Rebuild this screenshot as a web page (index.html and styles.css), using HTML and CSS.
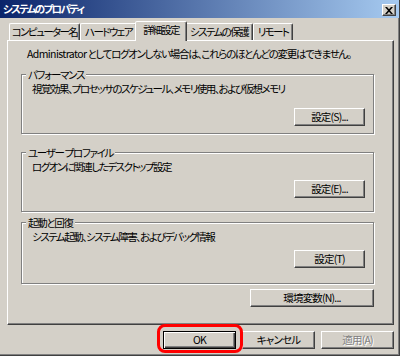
FILE: index.html
```html
<!DOCTYPE html>
<html lang="ja">
<head>
    <meta charset="UTF-8">
    <title>システムのプロパティ</title>
    <link rel="stylesheet" href="styles.css">
</head>
<body>
    <div class="window">
        <div class="titlebar">
            <span class="title">システムのプロパティ</span>
            <span class="close">
                <svg width="8" height="7" viewBox="0 0 8 7"><path d="M0 0h2l2 2.2L6 0h2L5 3.5 8 7H6L4 4.8 2 7H0l3-3.5z" fill="#000"/></svg>
            </span>
        </div>
        <div class="body">
            <div class="tabs">
                <span class="tab t1">コンピューター名</span>
                <span class="tab t2">ハードウェア</span>
                <span class="tab t3 active">詳細設定</span>
                <span class="tab t4">システムの保護</span>
                <span class="tab t5">リモート</span>
            </div>
            <div class="panel">
                <p class="note"><span class="latin">Administrator</span> としてログオンしない場合は、これらのほとんどの変更はできません。</p>

                <div class="group g-perf">
                    <div class="legend">パフォーマンス</div>
                    <p class="desc">視覚効果、プロセッサのスケジュール、メモリ使用、および仮想メモリ</p>
                    <button class="btn">設定(S)...</button>
                </div>

                <div class="group g-prof">
                    <div class="legend">ユーザー プロファイル</div>
                    <p class="desc">ログオンに関連したデスクトップ設定</p>
                    <button class="btn">設定(E)...</button>
                </div>

                <div class="group g-boot">
                    <div class="legend">起動と回復</div>
                    <p class="desc">システム起動、システム障害、およびデバッグ情報</p>
                    <button class="btn">設定(T)</button>
                </div>

                <button class="btn env">環境変数(N)...</button>
            </div>
            <div class="actions">
                <button class="btn wide ok">OK</button>
                <button class="btn wide">キャンセル</button>
                <button class="btn wide" disabled>適用(A)</button>
            </div>
        </div>
    </div>
</body>
</html>
```

FILE: styles.css
```css
* {
    box-sizing: border-box;
    margin: 0;
    padding: 0;
}
body {
    width: 400px;
    height: 356px;
    overflow: hidden;
    background: #d4d0c8;
    color: #000;
    font: 10.5px/14px "Noto Sans CJK JP", sans-serif;
    font-feature-settings: "palt";
    letter-spacing: -1.3px;
}
.window {
    width: 400px;
    height: 356px;
    border-right: 1px solid #404040;
    border-bottom: 1px solid #404040;
    box-shadow: inset -1px -1px 0 #808080;
}

/* タイトルバー */
.titlebar {
    height: 18px;
    display: flex;
    align-items: center;
    justify-content: space-between;
    padding: 0 3px 0 3px;
    background: linear-gradient(to right, #0a246a, #a6caf0);
    color: #fff;
    font-weight: bold;
    letter-spacing: -1.7px;
}
.close {
    width: 14px;
    height: 12px;
    margin-top: 2px;
    display: flex;
    align-items: center;
    justify-content: center;
    background: #d4d0c8;
    border: 1px solid;
    border-color: #fff #404040 #404040 #fff;
    box-shadow: inset -1px -1px 0 #808080;
}

.body {
    padding: 3px 5px 0 7px;
}

/* タブ */
.tabs {
    display: flex;
    align-items: flex-end;
    height: 19px;
    padding-left: 2px;
}
.tab {
    height: 17px;
    padding-top: 1px;
    text-align: center;
    white-space: nowrap;
    letter-spacing: -1.6px;
    border: 1px solid;
    border-bottom: none;
    border-color: #fff #404040 transparent #fff;
    border-radius: 2px 2px 0 0;
    box-shadow: inset -1px 0 0 #808080;
}
.t1 { width: 71px; }
.t2 { width: 57px; }
.t3 { width: 48px; }
.t4 { width: 68px; }
.t5 { width: 40px; }
.tab.active {
    position: relative;
    z-index: 1;
    width: 52px;
    height: 20px;
    margin: 0 -2px -1px;
    padding-top: 1px;
    background: #d4d0c8;
}

/* パネル */
.panel {
    height: 285px;
    padding: 6px 19px 0 13px;
    border: 1px solid;
    border-color: #fff #404040 #404040 #fff;
    box-shadow: inset -1px -1px 0 #808080;
}
.note {
    padding-left: 6px;
    white-space: nowrap;
}
.latin {
    letter-spacing: -0.6px;
}

.group {
    display: flex;
    flex-direction: column;
    height: 60px;
    margin-top: 18px;
    padding: 0 8px 0 10px;
    border: 1px solid #808080;
    box-shadow: 1px 1px 0 #fff, inset 1px 1px 0 #fff;
}
.g-perf { margin-top: 13px; }
.g-boot { height: 62px; margin-top: 10px; }
.legend {
    align-self: flex-start;
    margin: -7px 0 0 -6px;
    padding: 0 2px;
    background: #d4d0c8;
    white-space: nowrap;
}
.desc {
    white-space: nowrap;
    letter-spacing: -1.5px;
}
.group .btn {
    margin-top: 6px;
    align-self: flex-end;
}
.g-perf .btn { margin-top: 12px; }

/* ボタン */
.btn {
    display: block;
    width: 71px;
    height: 18px;
    background: #d4d0c8;
    color: #000;
    font: inherit;
    letter-spacing: -0.8px;
    text-align: center;
    border: 1px solid;
    border-color: #fff #404040 #404040 #fff;
    border-radius: 0;
    box-shadow: inset -1px -1px 0 #808080;
    appearance: none;
}
.btn.env {
    width: 124px;
    margin: 5px 0 0 auto;
}
.btn:disabled {
    color: #808080;
    text-shadow: 1px 1px 0 #fff;
}

.actions {
    display: flex;
    justify-content: flex-end;
    gap: 6px;
    margin-top: 6px;
}
.btn.wide {
    width: 73px;
}
.btn.ok {
    position: relative;
    border: 1px solid #000;
    box-shadow: inset 1px 1px 0 #fff, inset -1px -1px 0 #404040, inset -2px -2px 0 #808080;
}
/* 赤い囲み */
.btn.ok::after {
    content: "";
    position: absolute;
    top: -8px;
    left: -7px;
    right: -8px;
    bottom: -5px;
    border: 3px solid #f00;
    border-radius: 8px;
}
```
